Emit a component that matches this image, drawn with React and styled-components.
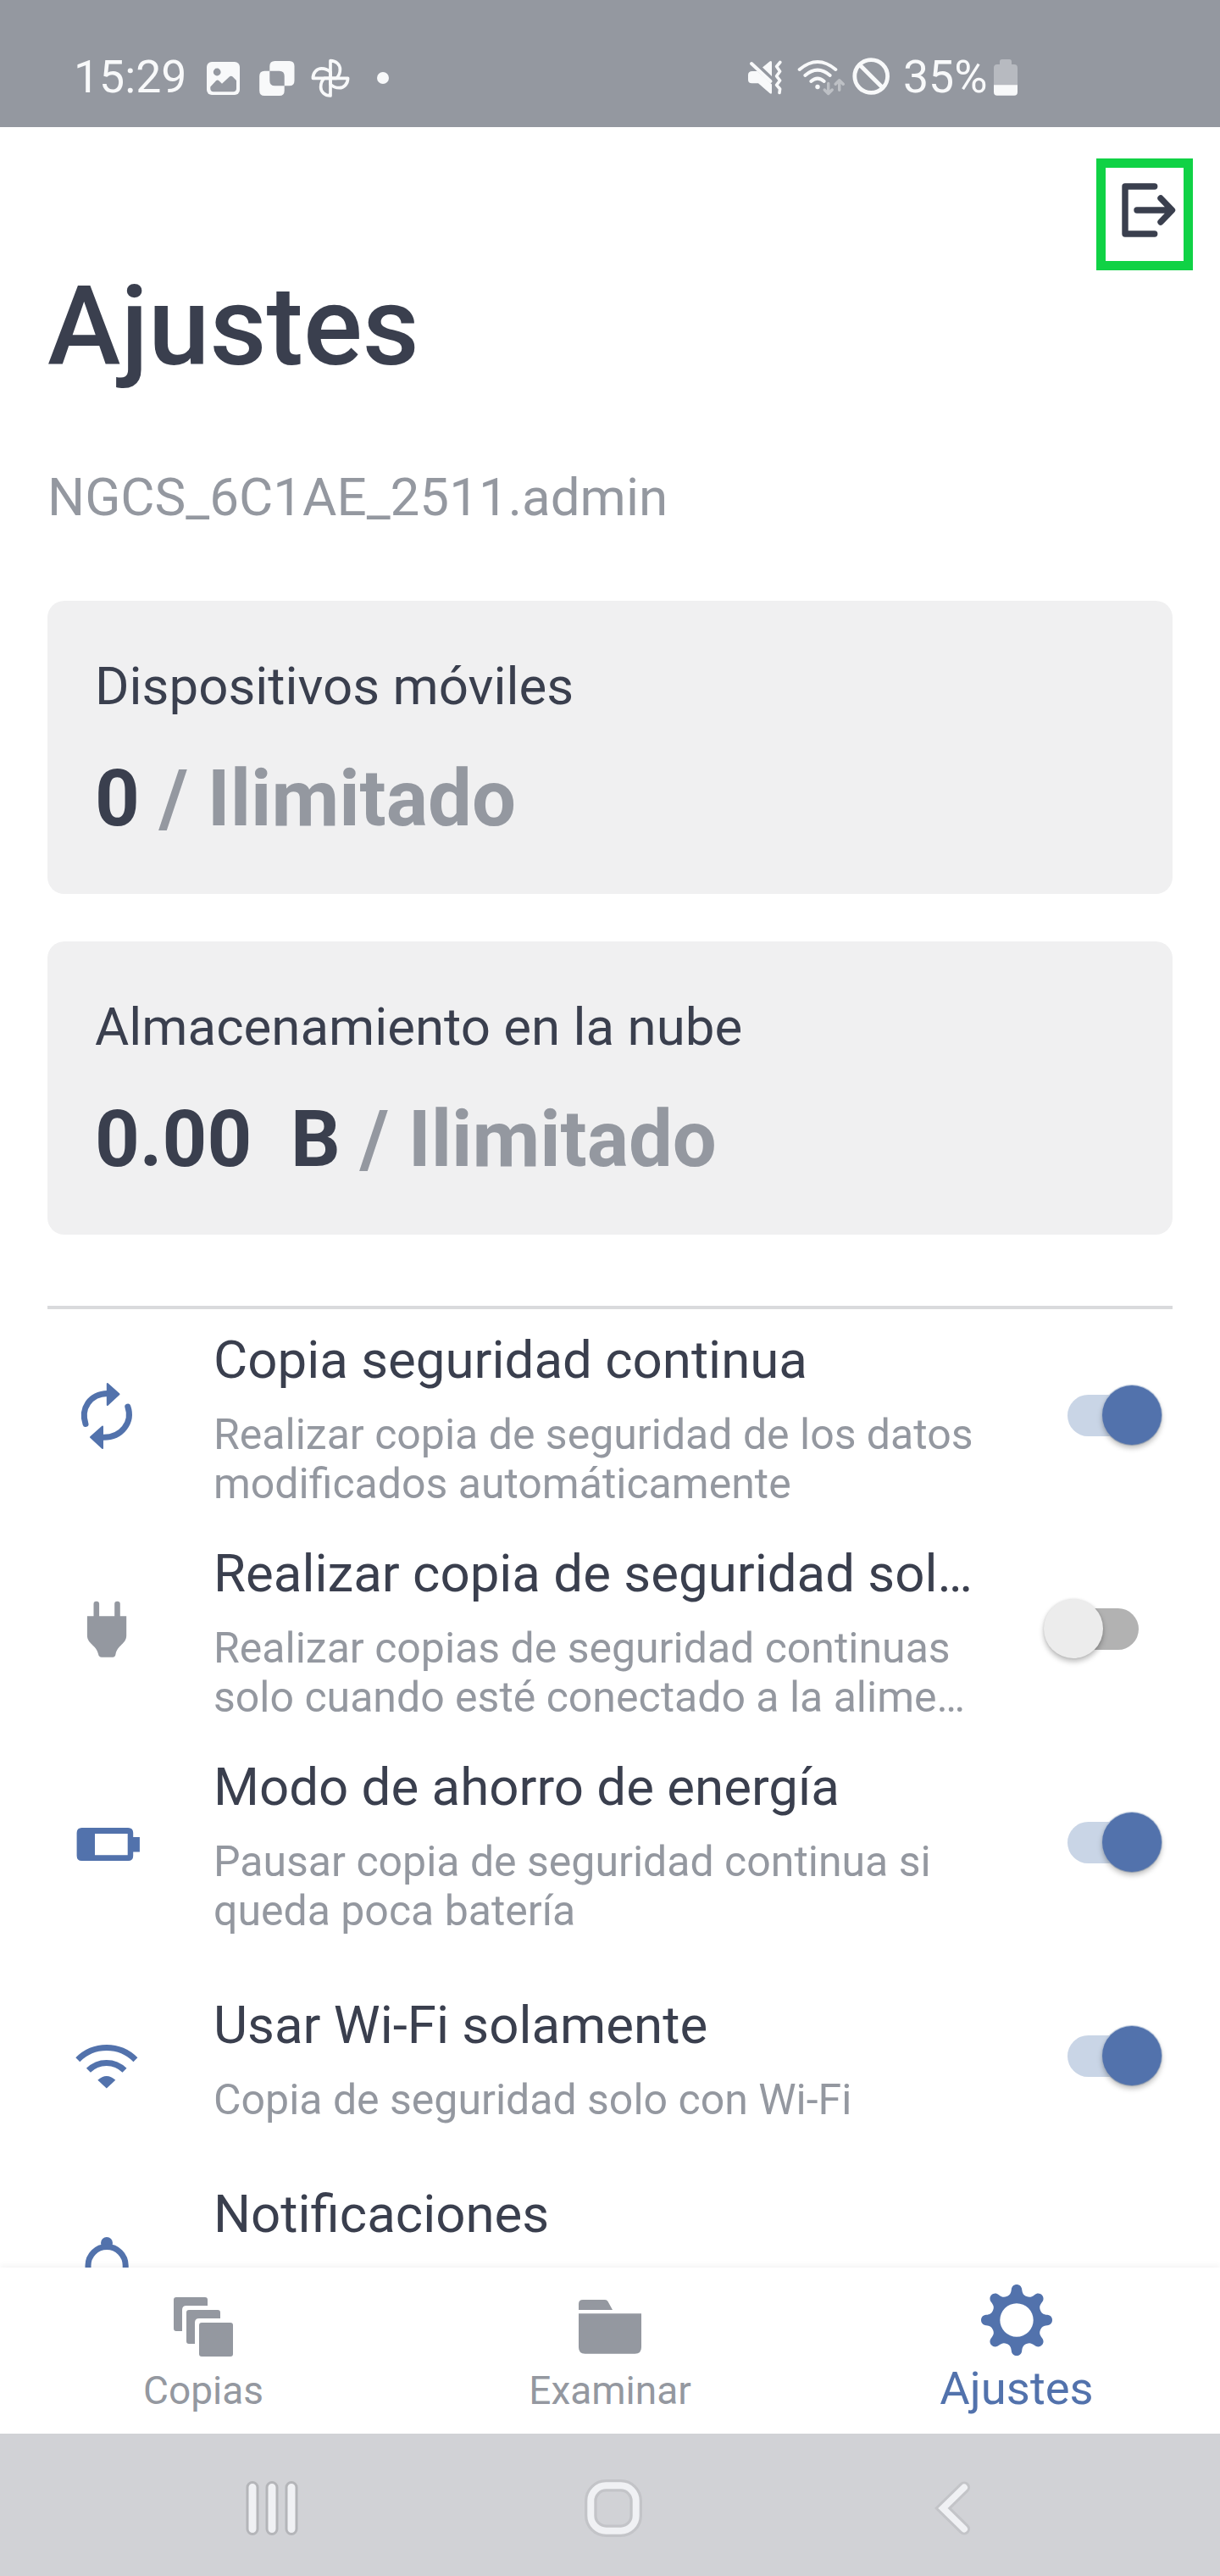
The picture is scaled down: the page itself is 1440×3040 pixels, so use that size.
import * as React from "react";
import { useState } from "react";
import styled, { createGlobalStyle } from "styled-components";

const GlobalStyle = createGlobalStyle`
  body {
    margin: 0;
    background: #fff;
    font-family: Roboto, "Liberation Sans", sans-serif;
  }
`;

const dark = "#3a3f4e";
const grey = "#9498a0";
const blue = "#5272ac";
const light = "#f8f9fa";

const Screen = styled.div`
  display: flex;
  flex-direction: column;
  width: 1440px;
  height: 3040px;
  overflow: hidden;
  color: ${dark};
`;

const StatusBar = styled.header`
  display: grid;
  grid-template-columns: 796px 1fr;
  align-items: center;
  flex: none;
  box-sizing: border-box;
  height: 150px;
  padding: 34px 0 0 87px;
  background: ${grey};
  color: ${light};
`;
const StatusGroup = styled.div`
  display: flex;
  align-items: center;
`;
const StatusText = styled.span`
  width: ${(p) => p.$width}px;
  margin: 0 0 2px ${(p) => p.$gap || 0}px;
  font-size: 53.6px;
  line-height: 62px;
  white-space: nowrap;
`;
const StatusIcon = styled.svg`
  flex: none;
  height: 48px;
  margin-left: ${(p) => p.$gap || 0}px;
`;

const Content = styled.main`
  flex: 1;
  min-height: 0;
  overflow: hidden;
  padding: 0 56px;
`;
const TitleRow = styled.div`
  display: flex;
  justify-content: space-between;
  align-items: flex-start;
  height: 312px;
`;
const Title = styled.h1`
  margin: 159px 0 0;
  font-size: 130.3px;
  font-weight: 500;
  line-height: 154px;
`;
const LogoutButton = styled.button`
  box-sizing: border-box;
  width: 114px;
  height: 132px;
  margin: 37px -24px 0 0;
  padding: 0;
  border: 11px solid #10d245;
  background: #fff;
  color: ${dark};

  svg {
    display: block;
  }
`;
const Account = styled.p`
  margin: 89px 0 86px;
  color: ${grey};
  font-size: 61.9px;
  line-height: 72px;
`;

const Card = styled.section`
  box-sizing: border-box;
  height: 346px;
  margin-bottom: 56px;
  padding: 65px 56px 0;
  border-radius: 20px;
  background: #f0f0f1;
`;
const CardLabel = styled.div`
  font-size: 61.8px;
  line-height: 72px;
`;
const CardValue = styled.div`
  margin-top: 43px;
  font-size: 92.1px;
  font-weight: 700;
  line-height: 108px;
  white-space: pre;
`;
const Limit = styled.span`
  color: ${grey};
`;

const Divider = styled.hr`
  height: 4px;
  margin: 84px 0 -1px;
  border: 0;
  background: #d9dadc;
`;
const Row = styled.div`
  display: flex;
  align-items: center;
  height: 252px;
  padding-left: 28px;
`;
const RowIcon = styled.svg`
  flex: none;
  width: 84px;
  height: 84px;
  color: ${(p) => (p.$muted ? grey : blue)};
`;
const RowText = styled.div`
  width: 900px;
  margin-left: 84px;
  padding-top: 9px;
`;
const RowTitle = styled.div`
  font-size: 61.8px;
  line-height: 72px;
  white-space: nowrap;
`;
const RowNote = styled.div`
  height: ${(p) => p.$lines * 57.75}px;
  margin-top: 24px;
  color: ${grey};
  font-size: 50px;
  line-height: 57.75px;
`;
const Track = styled.button`
  position: relative;
  width: 98px;
  height: 49px;
  margin: 0 ${(p) => (p.$on ? 26 : 40)}px 0 auto;
  padding: 0;
  border: 0;
  border-radius: 25px;
  background: ${(p) => (p.$on ? "#c9d5e6" : "#b2b2b2")};
`;
const Knob = styled.span`
  position: absolute;
  top: -10.5px;
  left: ${(p) => (p.$on ? 41 : -14)}px;
  width: 70px;
  height: 70px;
  border-radius: 50%;
  background: ${(p) => (p.$on ? blue : "#ececec")};
  box-shadow: 0 4px 6px rgba(0, 0, 0, 0.26), 0 0 3px rgba(0, 0, 0, 0.1)
    ${(p) => (p.$on ? ", 0 0 0 1px #c3d3ea" : "")};
`;

const TabBar = styled.nav`
  position: relative;
  display: grid;
  grid-template-columns: repeat(3, 1fr);
  flex: none;
  height: 196px;
  background: #fff;
  box-shadow: 0 -2px 8px rgba(0, 0, 0, 0.05);
`;
const Tab = styled.div`
  display: flex;
  flex-direction: column;
  align-items: center;
  padding-top: 20px;
  color: ${(p) => (p.$active ? blue : grey)};
  font-size: ${(p) => (p.$active ? 54.4 : 46)}px;
  line-height: 60px;
`;
const TabLabel = styled.span`
  margin-top: ${(p) => (p.$active ? 9 : 11)}px;
`;

const SystemBar = styled.footer`
  display: flex;
  align-items: center;
  position: relative;
  flex: none;
  box-sizing: border-box;
  height: 168px;
  padding: 8px 0 0 290px;
  background: #d1d2d6;
`;
const SystemIcon = styled.svg`
  height: 68px;
  margin-left: ${(p) => p.$gap || 0}px;
`;

// outline of an eight-tooth cog around 42,42
const cogPath = () => {
  const parts = [];
  for (let i = 0; i < 8; i++) {
    const a = (i * Math.PI) / 4;
    const at = (x, y) =>
      `${(42 + x * Math.cos(a) - y * Math.sin(a)).toFixed(2)} ${(
        42 +
        x * Math.sin(a) +
        y * Math.cos(a)
      ).toFixed(2)}`;
    parts.push(`${i ? "L" : "M"}${at(-11.6, -28)}`);
    parts.push(`C${at(-8, -29.5)} ${at(-6.8, -31.5)} ${at(-6.2, -36)}`);
    parts.push(`C${at(-5.6, -44)} ${at(5.6, -44)} ${at(6.2, -36)}`);
    parts.push(`C${at(6.8, -31.5)} ${at(8, -29.5)} ${at(11.6, -28)}`);
  }
  return `${parts.join("")}ZM42 22.3a19.7 19.7 0 1 0 0 39.4a19.7 19.7 0 1 0 0-39.4Z`;
};

const SyncIcon = () => (
  <RowIcon viewBox="0 0 84 84" fill="none">
    <g stroke="currentColor" strokeWidth="7" strokeLinecap="round">
      <path d="M17 52.5C11 34 22 17 43 16.5" />
      <path d="M66.8 32C73 50 60 69 37 68.3" />
    </g>
    <g fill="currentColor" stroke="currentColor" strokeWidth="2" strokeLinejoin="round">
      <path d="M42.8 5L56.5 17.3L42.8 30Z" />
      <path d="M37 55.5L23 68L37 81Z" />
    </g>
  </RowIcon>
);

const PlugIcon = () => (
  <RowIcon viewBox="0 0 84 84" fill="currentColor" $muted>
    <rect x="26.5" y="9.7" width="6.6" height="22" rx="3.3" />
    <rect x="51.2" y="9.7" width="6.6" height="22" rx="3.3" />
    <path d="M18.9 27.3H65.2V50C65.2 60 54.5 61.5 52.5 72Q52 75.8 49 75.8H36Q32.7 75.8 32 72C30 61.5 18.9 60 18.9 50Z" />
  </RowIcon>
);

const BatteryIcon = () => (
  <RowIcon viewBox="0 0 84 84" fill="currentColor" fillRule="evenodd">
    <path d="M12.6 25H67.2Q73.2 25 73.2 31V36H80.9V53.5H73.2V58Q73.2 64 67.2 64H12.6Q6.6 64 6.6 58V31Q6.6 25 12.6 25ZM28 31.9V57.2H66.7V31.9Z" />
  </RowIcon>
);

const WifiIcon = () => (
  <RowIcon viewBox="0 0 84 84" fill="none">
    <g stroke="currentColor" strokeWidth="7">
      <path d="M7.8 46.7A48 48 0 0 1 75.9 46.7" />
      <path d="M20.4 59.3A30 30 0 0 1 63 59.3" />
    </g>
    <path fill="currentColor" d="M31.3 70.8Q41.8 61.3 52.3 70.8L41.8 80.5Z" />
  </RowIcon>
);

const BellIcon = () => (
  <RowIcon viewBox="0 0 84 84" fill="none">
    <circle cx="42" cy="11" r="7" fill="currentColor" />
    <path
      stroke="currentColor"
      strokeWidth="7"
      strokeLinejoin="round"
      d="M20 62V37.6A22.1 22.1 0 0 1 64.2 37.6V62L70 68H14Z"
    />
  </RowIcon>
);

const settings = [
  {
    id: "continuous",
    icon: SyncIcon,
    title: "Copia seguridad continua",
    note: "Realizar copia de seguridad de los datos modificados automáticamente",
    lines: 2,
    on: true,
  },
  {
    id: "charging",
    icon: PlugIcon,
    title: "Realizar copia de seguridad sol…",
    note: "Realizar copias de seguridad continuas solo cuando esté conectado a la alime…",
    lines: 2,
    on: false,
  },
  {
    id: "saving",
    icon: BatteryIcon,
    title: "Modo de ahorro de energía",
    note: "Pausar copia de seguridad continua si queda poca batería",
    lines: 2,
    on: true,
  },
  {
    id: "wifi",
    icon: WifiIcon,
    title: "Usar Wi-Fi solamente",
    note: "Copia de seguridad solo con Wi-Fi",
    lines: 1,
    on: true,
  },
  {
    id: "notifications",
    icon: BellIcon,
    title: "Notificaciones",
    lines: 2,
  },
];

const Setting = ({ item }) => {
  const [on, setOn] = useState(item.on);
  const Icon = item.icon;

  return (
    <Row>
      <Icon />
      <RowText>
        <RowTitle>{item.title}</RowTitle>
        <RowNote $lines={item.lines}>{item.note}</RowNote>
      </RowText>
      {item.on !== undefined && (
        <Track $on={on} onClick={() => setOn(!on)}>
          <Knob $on={on} />
        </Track>
      )}
    </Row>
  );
};

const Status = () => (
  <StatusBar>
    <StatusGroup>
      <StatusText $width={157}>15:29</StatusText>
      <StatusIcon width="39" viewBox="0 0 39 48">
        <rect y="5" width="39" height="39" rx="6" fill={light} />
        <circle cx="12.2" cy="17" r="4.4" fill={grey} />
        <path
          fill={grey}
          d="M4.3 34.5L11 27.3Q12.7 25.5 14.4 27.3L18 30.8L26.8 22.6Q28.7 21 30.6 22.6L35 27V36.5Q35 40.2 31.3 40.2H8Q4.3 40.2 4.3 36.5Z"
        />
      </StatusIcon>
      <StatusIcon $gap={22.5} width="42" viewBox="0 0 42 48">
        <path
          fill={light}
          fillRule="evenodd"
          d="M18.5 4H35.5Q41.5 4 41.5 10V27.3Q41.5 33.3 35.5 33.3H18.5Q12.3 33.3 12.3 27.3V10Q12.3 4 18.5 4ZM6.2 15.7H23.7Q29.7 15.7 29.7 21.7V39Q29.7 45 23.7 45H6.2Q.2 45 .2 39V21.7Q.2 15.7 6.2 15.7Z"
        />
      </StatusIcon>
      <StatusIcon $gap={19} width="46" viewBox="-23 -24.3 46 48">
        <g fill="none" stroke={light} strokeWidth="3.7" strokeLinejoin="round">
          {[0, 90, 180, 270].map((turn) => (
            <path
              key={turn}
              transform={`rotate(${turn})`}
              d="M0 0V-20.6C7-20.6 11.4-15.8 11.4-10.4 11.4-6.5 10-2.8 7.2 0Z"
            />
          ))}
        </g>
      </StatusIcon>
      <StatusIcon $gap={32.5} width="14" viewBox="0 0 14 48">
        <circle cx="7" cy="24" r="7" fill={light} />
      </StatusIcon>
    </StatusGroup>
    <StatusGroup>
      <StatusIcon width="40" viewBox="0 -4 40 48" fill="none">
        <path
          fill={light}
          d="M5 12H11L28 27.5V37Q28 39.8 25.5 38L12 26.3H4.5Q0 26.3 0 22V16.5Q0 12 5 12ZM17 7.5L25.5.5Q28-.8 28 1.8V18Z"
        />
        <g stroke={light} strokeLinecap="round" strokeLinejoin="round">
          <path strokeWidth="4" d="M4 3L26.5 24" />
          <path
            strokeWidth="3.6"
            d="M37.8 1.5L33.6 6.5L37.6 12.2L33.6 17.8L37.6 23L33.6 28.3L37.6 33L37 37.5"
          />
        </g>
      </StatusIcon>
      <StatusIcon $gap={18} width="56" viewBox="0 -2 56 48" fill="none">
        <g stroke={light} strokeWidth="4" strokeLinecap="round">
          <path d="M2.7 12Q24-6 45.3 12" />
          <path d="M9.3 19Q24 6.4 38.7 19" />
          <path d="M16.3 26Q24 19.4 31.7 26" />
        </g>
        <circle cx="24" cy="32.5" r="2.7" fill={light} />
        <g stroke="#bdc0c5" strokeWidth="3.4" strokeLinecap="round" strokeLinejoin="round">
          <path d="M36.7 28.5V40M32.2 36L36.7 40.5L41.2 36" />
          <path d="M49.7 36.3V25M45.2 29.3L49.7 24.8L54.2 29.3" />
        </g>
      </StatusIcon>
      <StatusIcon $gap={9} width="44" viewBox="0 0 44 48" fill="none">
        <g stroke={light} strokeWidth="4.8">
          <circle cx="22.2" cy="22" r="19.4" />
          <path d="M8.5 8.3L36 35.7" />
        </g>
      </StatusIcon>
      <StatusText $gap={16} $width={107}>
        35%
      </StatusText>
      <StatusIcon width="28" viewBox="0 0 28 48">
        <path
          fill="#b7bac0"
          d="M9.5 2H18.5Q21 2 21 4.5V8H24Q28 8 28 12V33H0V12Q0 8 4 8H7V4.5Q7 2 9.5 2Z"
        />
        <path fill={light} d="M0 32.3H28V40.7Q28 44.7 24 44.7H4Q0 44.7 0 40.7Z" />
      </StatusIcon>
    </StatusGroup>
  </StatusBar>
);

const App = () => (
  <Screen>
    <GlobalStyle />
    <Status />
    <Content>
      <TitleRow>
        <Title>Ajustes</Title>
        <LogoutButton>
          <svg width="92" height="110" viewBox="0 0 92 110" fill="none">
            <g
              stroke="currentColor"
              strokeWidth="7.4"
              strokeLinecap="round"
              strokeLinejoin="round"
            >
              <path d="M57.7 22H23V78H57.7" />
              <path d="M37 50H78M65 36L78.5 50L65 64" />
            </g>
          </svg>
        </LogoutButton>
      </TitleRow>
      <Account>NGCS_6C1AE_2511.admin</Account>
      <Card>
        <CardLabel>Dispositivos móviles</CardLabel>
        <CardValue>
          0<Limit> / Ilimitado</Limit>
        </CardValue>
      </Card>
      <Card>
        <CardLabel>Almacenamiento en la nube</CardLabel>
        <CardValue>
          {"0.00  B"}
          <Limit> / Ilimitado</Limit>
        </CardValue>
      </Card>
      <Divider />
      {settings.map((item) => (
        <Setting key={item.id} item={item} />
      ))}
    </Content>
    <TabBar>
      <Tab>
        <svg width="84" height="84" viewBox="-7 -15 84 84" overflow="visible" fill="currentColor">
          <path d="M3 0H37Q40 0 40 3V10H15Q10 10 10 15V40H3Q0 40 0 37V3Q0 0 3 0Z" />
          <path d="M18 15H52Q55 15 55 18V25H30Q25 25 25 30V55H18Q15 55 15 52V18Q15 15 18 15Z" />
          <rect x="30" y="30" width="40" height="40" rx="3" />
        </svg>
        <TabLabel>Copias</TabLabel>
      </Tab>
      <Tab>
        <svg width="84" height="84" viewBox="-5 -18 84 84" fill="currentColor">
          <path d="M5 0H31Q33.5 0 34.5 2L40 12H0V5Q0 0 5 0Z" />
          <path d="M0 16.3H74V56Q74 63.8 66.5 63.8H7.5Q0 63.8 0 56Z" />
        </svg>
        <TabLabel>Examinar</TabLabel>
      </Tab>
      <Tab $active>
        <svg width="84" height="84" viewBox="0 0 84 84" fill="currentColor" fillRule="evenodd">
          <path d={cogPath()} />
        </svg>
        <TabLabel $active>Ajustes</TabLabel>
      </Tab>
    </TabBar>
    <SystemBar>
      <SystemIcon width="62" viewBox="0 0 62 68" strokeLinecap="round">
        <path stroke="#b4b5b9" strokeWidth="15" d="M8 9.5V58.5M31 9.5V58.5M54 9.5V58.5" />
        <path stroke="#f0f1f4" strokeWidth="9" d="M8 9.5V58.5M31 9.5V58.5M54 9.5V58.5" />
      </SystemIcon>
      <SystemIcon $gap={337.5} width="68" viewBox="0 0 68 68" fill="none">
        <rect x="7.3" y="7.3" width="53.4" height="53.4" rx="18" stroke="#c3c4c8" strokeWidth="14.6" />
        <rect x="7.3" y="7.3" width="53.4" height="53.4" rx="18" stroke="#f0f1f4" strokeWidth="8" />
      </SystemIcon>
      <SystemIcon $gap={344.5} width="44" viewBox="0 0 44 68" fill="none" strokeLinecap="round">
        <path stroke="#c3c4c8" strokeWidth="14" d="M36 9.5L11 34L36 58.5" />
        <path stroke="#f0f1f4" strokeWidth="8" d="M36 9.5L11 34L36 58.5" />
      </SystemIcon>
    </SystemBar>
  </Screen>
);

export default App;
